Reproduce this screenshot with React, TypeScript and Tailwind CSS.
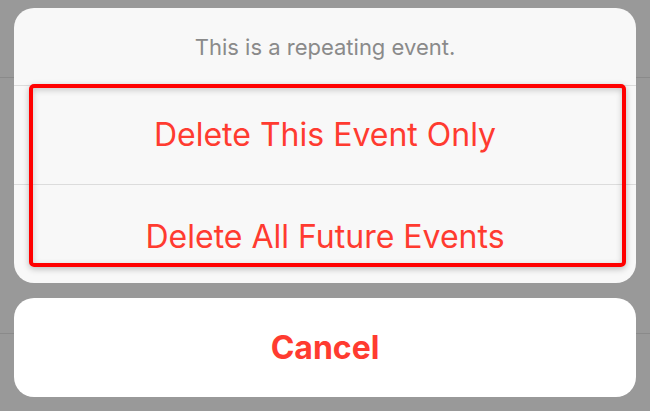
import React from 'react'

const App: React.FC = () => {
    return (
        <div
            className="relative w-[650px] h-[411px] overflow-hidden bg-[#999999] flex flex-col px-[14px] pt-[8px]"
            style={{ fontFamily: 'Inter, "Liberation Sans", sans-serif' }}
        >
            {/* list separators behind the sheet */}
            <div className="absolute left-0 right-0 top-[77px] h-px bg-[#8a8a8a]" />
            <div className="absolute left-0 right-0 top-[333px] h-px bg-[#8a8a8a]" />

            <div className="relative z-10 h-[275px] rounded-[20px] bg-[#f8f8f8] flex flex-col">
                <div className="h-[77px] flex items-center justify-center text-[22px] text-[#8a8a8a] pt-[2px]">
                    This is a repeating event.
                </div>
                <div className="h-px bg-[#dcdcdc]" />
                <div className="h-[98px] flex items-center justify-center text-[32px] text-[#ff3b30]">
                    Delete This Event Only
                </div>
                <div className="h-px bg-[#dcdcdc]" />
                <div className="h-[98px] flex items-center justify-center text-[32px] text-[#ff3b30] pt-[6px]">
                    Delete All Future Events
                </div>

                <div className="absolute left-[15px] top-[76px] w-[597px] h-[183px] border-4 border-[#ff0000] rounded-[5px] shadow-[0_2px_6px_rgba(0,0,0,0.25),inset_0_2px_6px_rgba(0,0,0,0.2)]" />
            </div>

            <div className="relative z-10 mt-[15px] h-[99px] rounded-[20px] bg-white flex items-center justify-center text-[32px] font-bold text-[#ff3b30]">
                Cancel
            </div>
        </div>
    )
}

export default App
